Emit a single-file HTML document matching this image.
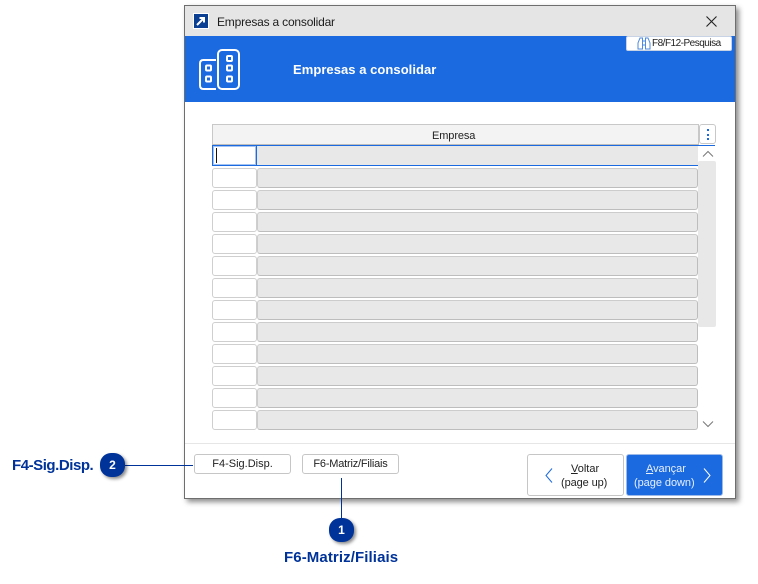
<!DOCTYPE html>
<html lang="pt"><head><meta charset="utf-8"><title>Empresas a consolidar</title>
<style>
html,body{margin:0;padding:0;background:#fff}
body{position:relative;width:758px;height:584px;overflow:hidden;font-family:"Liberation Sans",sans-serif;color:#222}
.a{position:absolute;box-sizing:border-box}
.t{position:absolute;white-space:nowrap;line-height:14px}
.s{background:#fff;border:1px solid #cfcfcf;border-radius:3px;left:212px;width:45px;height:20px}
.l{background:#e8e8e8;border:1px solid #cccccc;border-right-color:#bdbdbd;border-bottom-color:#bdbdbd;border-radius:3px;left:257px;width:441px;height:20px}
.btn{background:#fff;border:1px solid #c6c6c6;border-radius:3px;font-size:11px;text-align:center;line-height:18px;color:#222}
.lab{color:#003399;font-weight:bold;font-size:15px;line-height:18px}
.num{width:25px;height:24px;background:#003399;border-radius:11px;color:#fff;font-weight:bold;font-size:12px;text-align:center;line-height:24px;box-shadow:2px 2px 3px rgba(0,0,0,.45)}
</style></head><body>
<div class="a" style="left:184px;top:5px;width:552px;height:494px;background:#fff;border:1px solid #6e6e6e;box-shadow:3px 3px 5px rgba(0,0,0,.45)"></div>
<div class="a" style="left:185px;top:6px;width:550px;height:30px;background:#e5e5e5"></div>
<div class="a" style="left:185px;top:36px;width:550px;height:66px;background:#1b6ae0"></div>
<svg class="a" style="left:193px;top:13px" width="16" height="16" viewBox="0 0 16 16"><rect width="16" height="16" fill="#fff"/><rect x="1" y="1" width="14" height="14" fill="#0b3f92"/><path d="M4 12L10 6M6.500 5H11V9.500" stroke="#fff" stroke-width="2" fill="none"/></svg>
<div class="t" style="left:217px;top:15px;font-size:12px;letter-spacing:-.2px;color:#1c1c1c">Empresas a consolidar</div>
<svg class="a" style="left:705px;top:15px" width="13" height="13" viewBox="0 0 13 13"><path d="M1.500 1.500L11.500 11.500M11.500 1.500L1.500 11.500" stroke="#222" stroke-width="1.100" fill="none"/></svg>

<svg class="a" style="left:190px;top:40px" width="60" height="60" viewBox="190 40 60 60" fill="none" stroke="#fff" stroke-width="2">
<path d="M216 60H203.500Q200 60 200 63.500V85.500Q200 89 203.500 89H216"/>
<rect x="218" y="50" width="21" height="39" rx="4"/>
<rect x="206" y="65.500" width="5" height="5" rx="1"/><rect x="206" y="76.500" width="5" height="5" rx="1"/>
<rect x="227" y="56" width="5" height="5" rx="1"/><rect x="227" y="65.500" width="5" height="5" rx="1"/><rect x="227" y="76.500" width="5" height="5" rx="1"/>
</svg>
<div class="t" style="left:293px;top:63px;font-size:13px;font-weight:bold;letter-spacing:.05px;color:#fff">Empresas a consolidar</div>

<div class="a" style="left:626px;top:36px;width:106px;height:15px;background:#fff;border:1px solid #c9d3e6;border-radius:2px"></div>
<svg class="a" style="left:637px;top:37px" width="14" height="13" viewBox="0 0 14 13" fill="none" stroke="#4d8ae0" stroke-width="1"><path d="M1 12V6L3 1H5.500V12ZM8.500 12V1H11L13 6V12ZM5.500 4H8.500V8H5.500Z"/></svg>
<div class="t" style="left:652px;top:37px;font-size:10px;line-height:13px;letter-spacing:-.5px;color:#222">F8/F12-Pesquisa</div>

<div class="a" style="left:212px;top:124px;width:487px;height:21px;background:#f3f3f3;border:1px solid #c8c8c8;border-bottom:1px solid #bdbdbd"></div>
<div class="t" style="left:432px;top:129px;font-size:11px;letter-spacing:-.1px;color:#222">Empresa</div>
<div class="a" style="left:699px;top:124px;width:17px;height:20px;background:#fff;border:1px solid #c8c8c8;border-radius:3px"></div>
<div class="a" style="left:706.500px;top:129px;width:2px;height:2px;background:#1b6ae0"></div>
<div class="a" style="left:706.500px;top:134px;width:2px;height:2px;background:#1b6ae0"></div>
<div class="a" style="left:706.500px;top:138px;width:2px;height:2px;background:#1b6ae0"></div>

<div class="a" style="left:212px;top:145px;width:503px;height:1px;background:#1b6ae0"></div>
<div class="a" style="left:257px;top:146px;width:441px;height:19px;background:#e8e8e8"></div>
<div class="a" style="left:212px;top:165px;width:486px;height:1px;background:#1b6ae0"></div>
<div class="a" style="left:212px;top:145px;width:45px;height:21px;background:#fff;border:1px solid #1b6ae0;box-shadow:inset 0 0 0 1px rgba(27,106,224,.4)"></div>
<div class="a" style="left:216px;top:148px;width:1px;height:15px;background:#111"></div>

<div class="a s" style="top:168px"></div><div class="a l" style="top:168px"></div>
<div class="a s" style="top:190px"></div><div class="a l" style="top:190px"></div>
<div class="a s" style="top:212px"></div><div class="a l" style="top:212px"></div>
<div class="a s" style="top:234px"></div><div class="a l" style="top:234px"></div>
<div class="a s" style="top:256px"></div><div class="a l" style="top:256px"></div>
<div class="a s" style="top:278px"></div><div class="a l" style="top:278px"></div>
<div class="a s" style="top:300px"></div><div class="a l" style="top:300px"></div>
<div class="a s" style="top:322px"></div><div class="a l" style="top:322px"></div>
<div class="a s" style="top:344px"></div><div class="a l" style="top:344px"></div>
<div class="a s" style="top:366px"></div><div class="a l" style="top:366px"></div>
<div class="a s" style="top:388px"></div><div class="a l" style="top:388px"></div>
<div class="a s" style="top:410px"></div><div class="a l" style="top:410px"></div>

<svg class="a" style="left:702px;top:150px" width="12" height="8" viewBox="0 0 12 8"><path d="M1 6.500L6 1.500L11 6.500" stroke="#777" fill="none"/></svg>
<div class="a" style="left:698px;top:161px;width:18px;height:166px;background:#e8e8e8;border-radius:2px"></div>
<svg class="a" style="left:702px;top:420px" width="12" height="8" viewBox="0 0 12 8"><path d="M1 1.500L6 6.500L11 1.500" stroke="#777" fill="none"/></svg>

<div class="a" style="left:185px;top:443px;width:550px;height:1px;background:#e6e6e6"></div>
<div class="a btn" style="left:194px;top:454px;width:97px;height:20px">F4-Sig.Disp.</div>
<div class="a btn" style="left:302px;top:454px;width:97px;height:20px;letter-spacing:-.2px">F6-Matriz/Filiais</div>

<div class="a" style="left:527px;top:454px;width:97px;height:42px;background:#fff;border:1px solid #c6c6c6;border-radius:3px"></div>
<svg class="a" style="left:544px;top:467px" width="10" height="17" viewBox="0 0 10 17"><path d="M8 1.500L2 8.500L8 15.500" stroke="#1b6ae0" stroke-width="1" fill="none"/></svg>
<div class="t" style="left:571px;top:462px;font-size:11px;color:#222"><u>V</u>oltar</div>
<div class="t" style="left:561px;top:476px;font-size:11px;letter-spacing:-.1px;color:#222">(page up)</div>
<div class="a" style="left:626px;top:454px;width:97px;height:42px;background:#1b6ae0;border:1px solid #9db9e8;border-radius:3px"></div>
<div class="t" style="left:646px;top:462px;font-size:11px;letter-spacing:-.05px;color:#e8f0ff"><u>A</u>vançar</div>
<div class="t" style="left:634px;top:476px;font-size:11px;letter-spacing:-.05px;color:#e8f0ff">(page down)</div>
<svg class="a" style="left:702px;top:467px" width="10" height="17" viewBox="0 0 10 17"><path d="M2 1.500L8 8.500L2 15.500" stroke="#fff" stroke-width="1" fill="none"/></svg>

<div class="a" style="left:124px;top:465px;width:69px;height:1px;background:#003399"></div>
<div class="a" style="left:341px;top:478px;width:1px;height:41px;background:#003399"></div>
<div class="a num" style="left:100px;top:453px">2</div>
<div class="a num" style="left:329px;top:518px">1</div>
<div class="t lab" style="left:12px;top:457px;letter-spacing:-.45px">F4-Sig.Disp.</div>
<div class="t lab" style="left:284px;top:549px;letter-spacing:.1px">F6-Matriz/Filiais</div>
</body></html>
